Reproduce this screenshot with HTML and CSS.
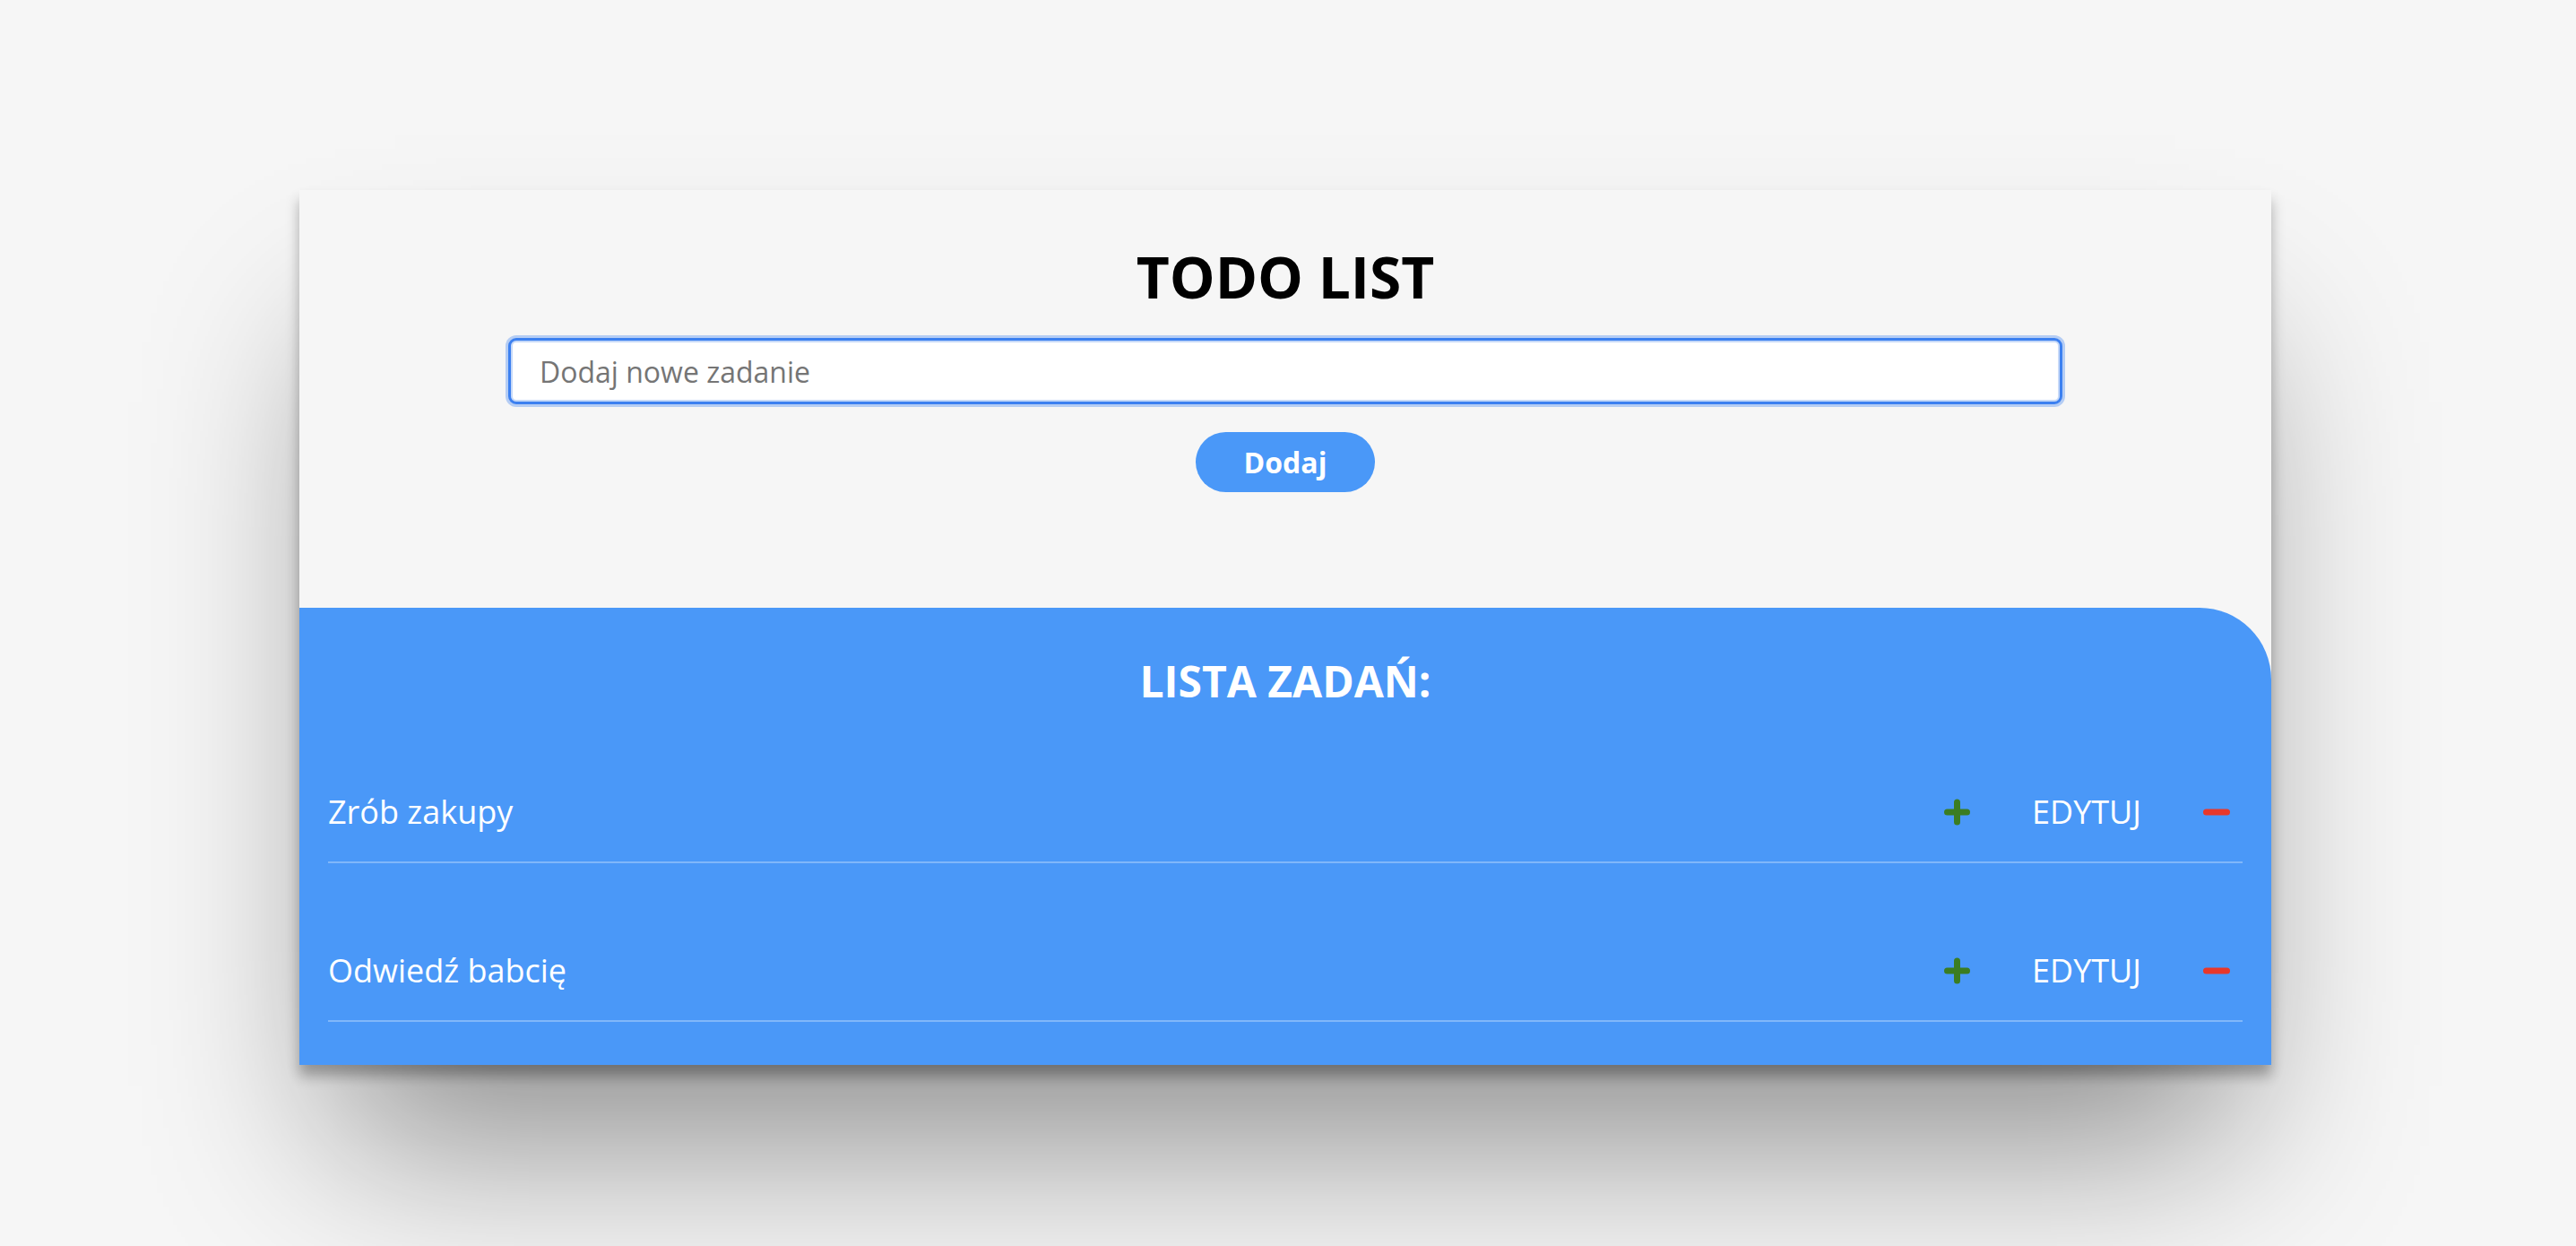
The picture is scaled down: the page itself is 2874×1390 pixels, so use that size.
FILE: index.html
```html
<!DOCTYPE html>
<html lang="pl">
<head>
<meta charset="utf-8">
<title>TODO LIST</title>
<link rel="stylesheet" href="styles.css">
</head>
<body>
<main class="card">
  <section class="top">
    <h1 class="title">TODO LIST</h1>
    <input class="task-input" type="text" placeholder="Dodaj nowe zadanie">
    <button class="add-btn">Dodaj</button>
  </section>
  <section class="list">
    <h2 class="list-title">LISTA ZADAŃ:</h2>
    <ul class="tasks">
      <li class="task">
        <span class="task-name">Zrób zakupy</span>
        <div class="actions">
          <button class="icon-btn"><svg class="icon" viewBox="0 0 30 30"><path d="M4 15H26M15 4V26" stroke="#3b7d22" stroke-width="7" stroke-linecap="round" fill="none"/></svg></button>
          <button class="edit-btn">EDYTUJ</button>
          <button class="icon-btn"><svg class="icon" viewBox="0 0 30 30"><path d="M4 15H27" stroke="#e8382b" stroke-width="7" stroke-linecap="round" fill="none"/></svg></button>
        </div>
      </li>
      <li class="task">
        <span class="task-name">Odwiedź babcię</span>
        <div class="actions">
          <button class="icon-btn"><svg class="icon" viewBox="0 0 30 30"><path d="M4 15H26M15 4V26" stroke="#3b7d22" stroke-width="7" stroke-linecap="round" fill="none"/></svg></button>
          <button class="edit-btn">EDYTUJ</button>
          <button class="icon-btn"><svg class="icon" viewBox="0 0 30 30"><path d="M4 15H27" stroke="#e8382b" stroke-width="7" stroke-linecap="round" fill="none"/></svg></button>
        </div>
      </li>
    </ul>
  </section>
</main>
</body>
</html>
```
FILE: styles.css
```css
* {
  box-sizing: border-box;
}

html {
  background: #f6f6f6;
}

body {
  margin: 0;
  padding: 0;
  min-height: 100vh;
  background: #f6f6f6;
  font-family: "Open Sans", "Noto Sans", sans-serif;
}

.card {
  width: 2200px;
  margin: 212px 0 0 334px;
  background: #f6f6f6;
  box-shadow: 0 130px 190px -40px rgba(0, 0, 0, 0.42), 0 12px 14px rgba(0, 0, 0, 0.3);
}

.top {
  height: 466px;
  padding-top: 64px;
  display: flex;
  flex-direction: column;
  align-items: center;
}

.title {
  margin: 0;
  font-size: 64px;
  line-height: 66px;
  font-weight: 700;
  color: #000;
}

.task-input {
  margin-top: 35px;
  width: 1734px;
  height: 74px;
  padding: 0 32px;
  border: 3px solid #3c80f0;
  border-radius: 9px;
  box-shadow: 0 0 0 3px rgba(60, 128, 240, 0.35), inset 0 0 0 2px #c6d9f8;
  background: #fff;
  font-family: "Open Sans", sans-serif;
  font-size: 32px;
  color: #333;
  outline: none;
}

.task-input::placeholder {
  color: #757575;
}

.add-btn {
  margin-top: 31px;
  width: 200px;
  height: 67px;
  border: none;
  border-radius: 34px;
  background: #4a98f8;
  color: #fff;
  font-family: "Open Sans", sans-serif;
  font-weight: 700;
  font-size: 32px;
  padding: 0;
}

.list {
  background: #4a98f8;
  border-top-right-radius: 80px;
  padding: 56px 0 48px;
}

.list-title {
  margin: 0;
  text-align: center;
  color: #fff;
  font-size: 48px;
  line-height: 52px;
  font-weight: 700;
}

.tasks {
  list-style: none;
  margin: 0 32px;
  padding: 0;
}

.task {
  display: flex;
  align-items: center;
  justify-content: space-between;
  padding: 95px 14px 30px 0;
  border-bottom: 2px solid rgba(255, 255, 255, 0.3);
}

.task-name {
  font-size: 36px;
  line-height: 50px;
  color: #fff;
}

.actions {
  display: flex;
  align-items: center;
  gap: 68px;
}

.icon-btn {
  border: none;
  background: none;
  padding: 0;
  width: 31px;
  height: 30px;
  display: flex;
}

.icon {
  width: 31px;
  height: 30px;
}

.edit-btn {
  border: none;
  background: none;
  padding: 0;
  font-family: "Open Sans", sans-serif;
  font-size: 36px;
  line-height: 50px;
  color: #fff;
}
```
